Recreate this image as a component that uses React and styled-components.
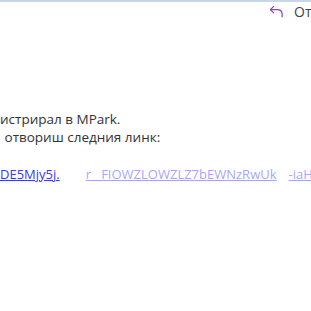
import React from 'react';
import styled, {createGlobalStyle} from 'styled-components';

const GlobalStyle = createGlobalStyle`
  html, body {
    margin: 0;
    padding: 0;
    background: #fff;
  }
  body {
    font-family: "Open Sans", "Noto Sans", sans-serif;
    width: 311px;
    height: 311px;
    overflow: hidden;
  }
`;

const Page = styled.div`
  width: 311px;
  height: 311px;
  border-top: 2px solid #c9d5e8;
  box-sizing: border-box;
  overflow: hidden;
`;

const Toolbar = styled.div`
  display: flex;
  justify-content: flex-end;
  align-items: center;
  height: 18px;
  margin-right: -40px;
`;

const ReplyButton = styled.div`
  display: flex;
  align-items: center;
  gap: 10px;
  color: #444;
  font-size: 14px;
  white-space: nowrap;
`;

const Body = styled.div`
  padding-top: 90px;
  font-size: 13.5px;
  line-height: 18px;
  color: #333;
  white-space: nowrap;
`;

const Line = styled.div`
  margin-left: ${p => p.indent || 0}px;
`;

const LinkRow = styled.div`
  display: flex;
  align-items: baseline;
  margin-top: 19px;
  font-size: 13px;
  line-height: 18px;
  white-space: nowrap;
`;

const Link = styled.a`
  color: #3a3af0;
  text-decoration: underline;
  opacity: ${p => p.faint ? 0.45 : 1};
  margin-left: ${p => p.gap || 0}px;
`;

function ReplyIcon() {
  return (
    <svg width="15" height="14" viewBox="0 0 16 14" fill="none">
      <path d="M5 2 L1.5 5.5 L5 9" stroke="#8e3fb0" strokeWidth="1.3" strokeLinecap="round" strokeLinejoin="round"/>
      <path d="M1.8 5.5 H9 C12 5.5 14 7.5 14 10.5 V13" stroke="#8e3fb0" strokeWidth="1.3" strokeLinecap="round"/>
    </svg>
  );
}

export default function App() {
  return (
    <>
      <GlobalStyle />
      <Page>
        <Toolbar>
          <ReplyButton>
            <ReplyIcon />
            <span>Отговор</span>
          </ReplyButton>
        </Toolbar>
        <Body>
          <Line>истрирал в MPark.</Line>
          <Line indent={1}>&nbsp;отвориш следния линк:</Line>
          <LinkRow>
            <Link href="#">DE5Mjy5j.</Link>
            <Link href="#" gap={26} faint>r&nbsp;&nbsp;&nbsp;FIOWZLOWZLZ7bEWNzRwUk</Link>
            <Link href="#" gap={12} faint>-iaHR0c</Link>
          </LinkRow>
        </Body>
      </Page>
    </>
  );
}
